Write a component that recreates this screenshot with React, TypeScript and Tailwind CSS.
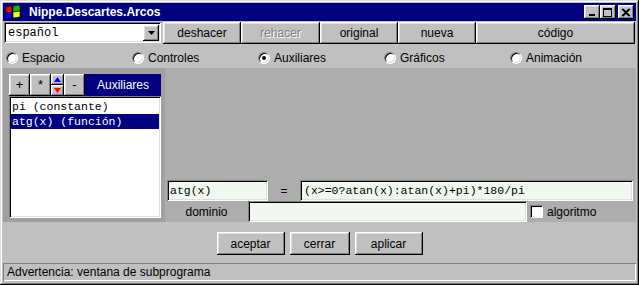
const raised =
  "shadow-[inset_-1px_-1px_#000,inset_1px_1px_#fff,inset_-2px_-2px_#808080,inset_2px_2px_#dfdfdf]";
const sunken =
  "shadow-[inset_1px_1px_#808080,inset_-1px_-1px_#fff,inset_2px_2px_#000,inset_-2px_-2px_#dfdfdf]";

function WinLogo() {
  return (
    <svg width="16" height="14" viewBox="0 0 16 14">
      <rect x="0" y="0" width="16" height="14" fill="#000080" />
      <path d="M1 2 L7 1 L7 7 L1 8 Z" fill="#ff0000" stroke="#000" strokeWidth="0.6" />
      <path d="M8 1 L15 0 L15 6 L8 7 Z" fill="#00c000" stroke="#000" strokeWidth="0.6" />
      <path d="M1 8 L7 7 L7 13 L1 14 Z" fill="#0000ff" stroke="#000" strokeWidth="0.6" />
      <path d="M8 7 L15 6 L15 12 L8 13 Z" fill="#ffff00" stroke="#000" strokeWidth="0.6" />
    </svg>
  );
}

function CaptionButton({ kind }: { kind: "min" | "max" | "close" }) {
  return (
    <div className={`grid h-[14px] w-[16px] place-items-center bg-[#c0c0c0] ${raised}`}>
      <svg width="10" height="9" viewBox="0 0 10 9">
        {kind === "min" && <rect x="2" y="6" width="6" height="2" fill="#000" />}
        {kind === "max" && (
          <>
            <rect x="0.5" y="0.5" width="8" height="8" fill="none" stroke="#000" />
            <rect x="0" y="0" width="9" height="2" fill="#000" />
          </>
        )}
        {kind === "close" && (
          <path d="M1 1 L8 8 M8 1 L1 8 M2 1 L9 8 M9 1 L2 8" stroke="#000" strokeWidth="1.2" />
        )}
      </svg>
    </div>
  );
}

function Btn({ label, w, disabled }: { label: string; w: string; disabled?: boolean }) {
  return (
    <div
      className={`grid h-full place-items-center bg-[#c0c0c0] text-[12px] ${raised} ${w} ${
        disabled ? "text-[#808080] [text-shadow:1px_1px_#fff]" : "text-black"
      }`}
    >
      {label}
    </div>
  );
}

function Radio({ label, checked }: { label: string; checked?: boolean }) {
  return (
    <div className="flex items-center gap-[4px]">
      <div className="grid h-[12px] w-[12px] place-items-center rounded-full border border-t-[#808080] border-r-white border-b-white border-l-[#808080] bg-white shadow-[inset_1px_1px_#000,inset_-1px_-1px_#dfdfdf]">
        {checked && <div className="h-[4px] w-[4px] rounded-full bg-black" />}
      </div>
      <span className="text-[12px] text-black">{label}</span>
    </div>
  );
}

function ToolBtn({ label, w }: { label: string; w: string }) {
  return (
    <div className={`grid h-full place-items-center bg-[#c0c0c0] text-[13px] text-black ${raised} ${w}`}>
      {label}
    </div>
  );
}

export default function App() {
  return (
    <div
      className={`flex h-[285px] w-[639px] flex-col bg-[#c0c0c0] p-[3px] font-['Liberation_Sans',Arial,sans-serif] shadow-[inset_-1px_-1px_#000,inset_1px_1px_#dfdfdf,inset_-2px_-2px_#808080,inset_2px_2px_#fff]`}
    >
      {/* title bar */}
      <div className="flex h-[18px] items-center bg-[#000080] pl-[2px] pr-[2px]">
        <WinLogo />
        <span className="ml-[8px] text-[12px] font-bold text-white">Nippe.Descartes.Arcos</span>
        <div className="ml-auto flex items-center">
          <CaptionButton kind="min" />
          <CaptionButton kind="max" />
          <div className="w-[2px]" />
          <CaptionButton kind="close" />
        </div>
      </div>

      {/* toolbar */}
      <div className="mt-[1px] flex h-[22px]">
        <div className={`ml-[1px] flex h-[21px] w-[157px] items-center bg-white pl-[4px] pr-[2px] ${sunken}`}>
          <span className="font-['Liberation_Mono',monospace] text-[12px] text-black">español</span>
          <div className={`ml-auto grid h-[16px] w-[16px] place-items-center bg-[#c0c0c0] ${raised}`}>
            <svg width="7" height="4" viewBox="0 0 7 4">
              <path d="M0 0 H7 L3.5 4 Z" fill="#000" />
            </svg>
          </div>
        </div>
        <div className="ml-[2px] flex flex-1 pr-[1px]">
          <Btn label="deshacer" w="w-[78px]" />
          <Btn label="rehacer" w="w-[79px]" disabled />
          <Btn label="original" w="w-[78px]" />
          <Btn label="nueva" w="w-[78px]" />
          <Btn label="código" w="flex-1" />
        </div>
      </div>

      {/* radios */}
      <div className="grid h-[24px] grid-cols-5 items-center pt-[3px] pl-[3px]">
        <Radio label="Espacio" />
        <Radio label="Controles" />
        <Radio label="Auxiliares" checked />
        <Radio label="Gráficos" />
        <Radio label="Animación" />
      </div>

      {/* main panel */}
      <div className="flex h-[154px]">
        <div className="flex w-[162px] flex-col bg-[#a0a0a0] pt-[6px] pb-[4px] pl-[6px] pr-[4px]">
          <div className="flex h-[22px]">
            <ToolBtn label="+" w="w-[21px]" />
            <ToolBtn label="*" w="w-[21px]" />
            <div className="flex w-[13px] flex-col">
              <div className={`grid flex-1 place-items-center bg-[#c0c0c0] ${raised}`}>
                <svg width="7" height="5" viewBox="0 0 7 5">
                  <path d="M3.5 0 L7 5 H0 Z" fill="#0000ff" />
                </svg>
              </div>
              <div className={`grid flex-1 place-items-center bg-[#c0c0c0] ${raised}`}>
                <svg width="7" height="5" viewBox="0 0 7 5">
                  <path d="M0 0 H7 L3.5 5 Z" fill="#ff0000" />
                </svg>
              </div>
            </div>
            <ToolBtn label="-" w="w-[21px]" />
            <div className="grid flex-1 place-items-center bg-[#000080] text-[12px] text-white">Auxiliares</div>
          </div>
          <div
            className={`flex flex-1 flex-col bg-white pt-[3px] pl-[2px] pr-[2px] font-['Liberation_Mono',monospace] text-[11.5px] ${sunken}`}
          >
            <div className="flex h-[15px] items-center pl-[1px] text-black">pi (constante)</div>
            <div className="flex h-[15px] items-center bg-[#000080] pl-[1px] text-white">atg(x) (función)</div>
          </div>
        </div>

        <div className="flex flex-1 flex-col justify-end bg-[#adadad]">
          <div className="flex h-[21px] pl-[2px] pr-[3px]">
            <div
              className={`flex w-[101px] items-center bg-[#f0f8f0] pl-[3px] font-['Liberation_Mono',monospace] text-[11.5px] text-black ${sunken}`}
            >
              atg(x)
            </div>
            <div className="grid w-[32px] place-items-center text-[12px] text-black">=</div>
            <div
              className={`flex flex-1 items-center bg-[#f0f8f0] pl-[4px] font-['Liberation_Mono',monospace] text-[11.5px] text-black ${sunken}`}
            >
              (x&gt;=0?atan(x):atan(x)+pi)*180/pi
            </div>
          </div>
          <div className="flex h-[21px] items-center">
            <div className="grid w-[83px] place-items-center text-[12px] text-black">dominio</div>
            <div className={`h-full w-[279px] bg-[#f0f8f0] ${sunken}`} />
            <div className="ml-[3px] h-[13px] w-[13px] bg-white shadow-[inset_1px_1px_#808080,inset_-1px_-1px_#fff,inset_2px_2px_#000]" />
            <span className="ml-[4px] text-[12px] text-black">algoritmo</span>
          </div>
        </div>
      </div>

      {/* bottom buttons */}
      <div className="flex h-[41px] justify-center gap-[5px] pt-[10px] pb-[8px]">
        <Btn label="aceptar" w="w-[68px]" />
        <Btn label="cerrar" w="w-[60px]" />
        <Btn label="aplicar" w="w-[68px]" />
      </div>

      {/* status */}
      <div className="flex h-[18px] items-center pl-[4px] text-[12px] text-black shadow-[inset_1px_1px_#808080,inset_-1px_-1px_#fff]">
        Advertencia: ventana de subprograma
      </div>
    </div>
  );
}
